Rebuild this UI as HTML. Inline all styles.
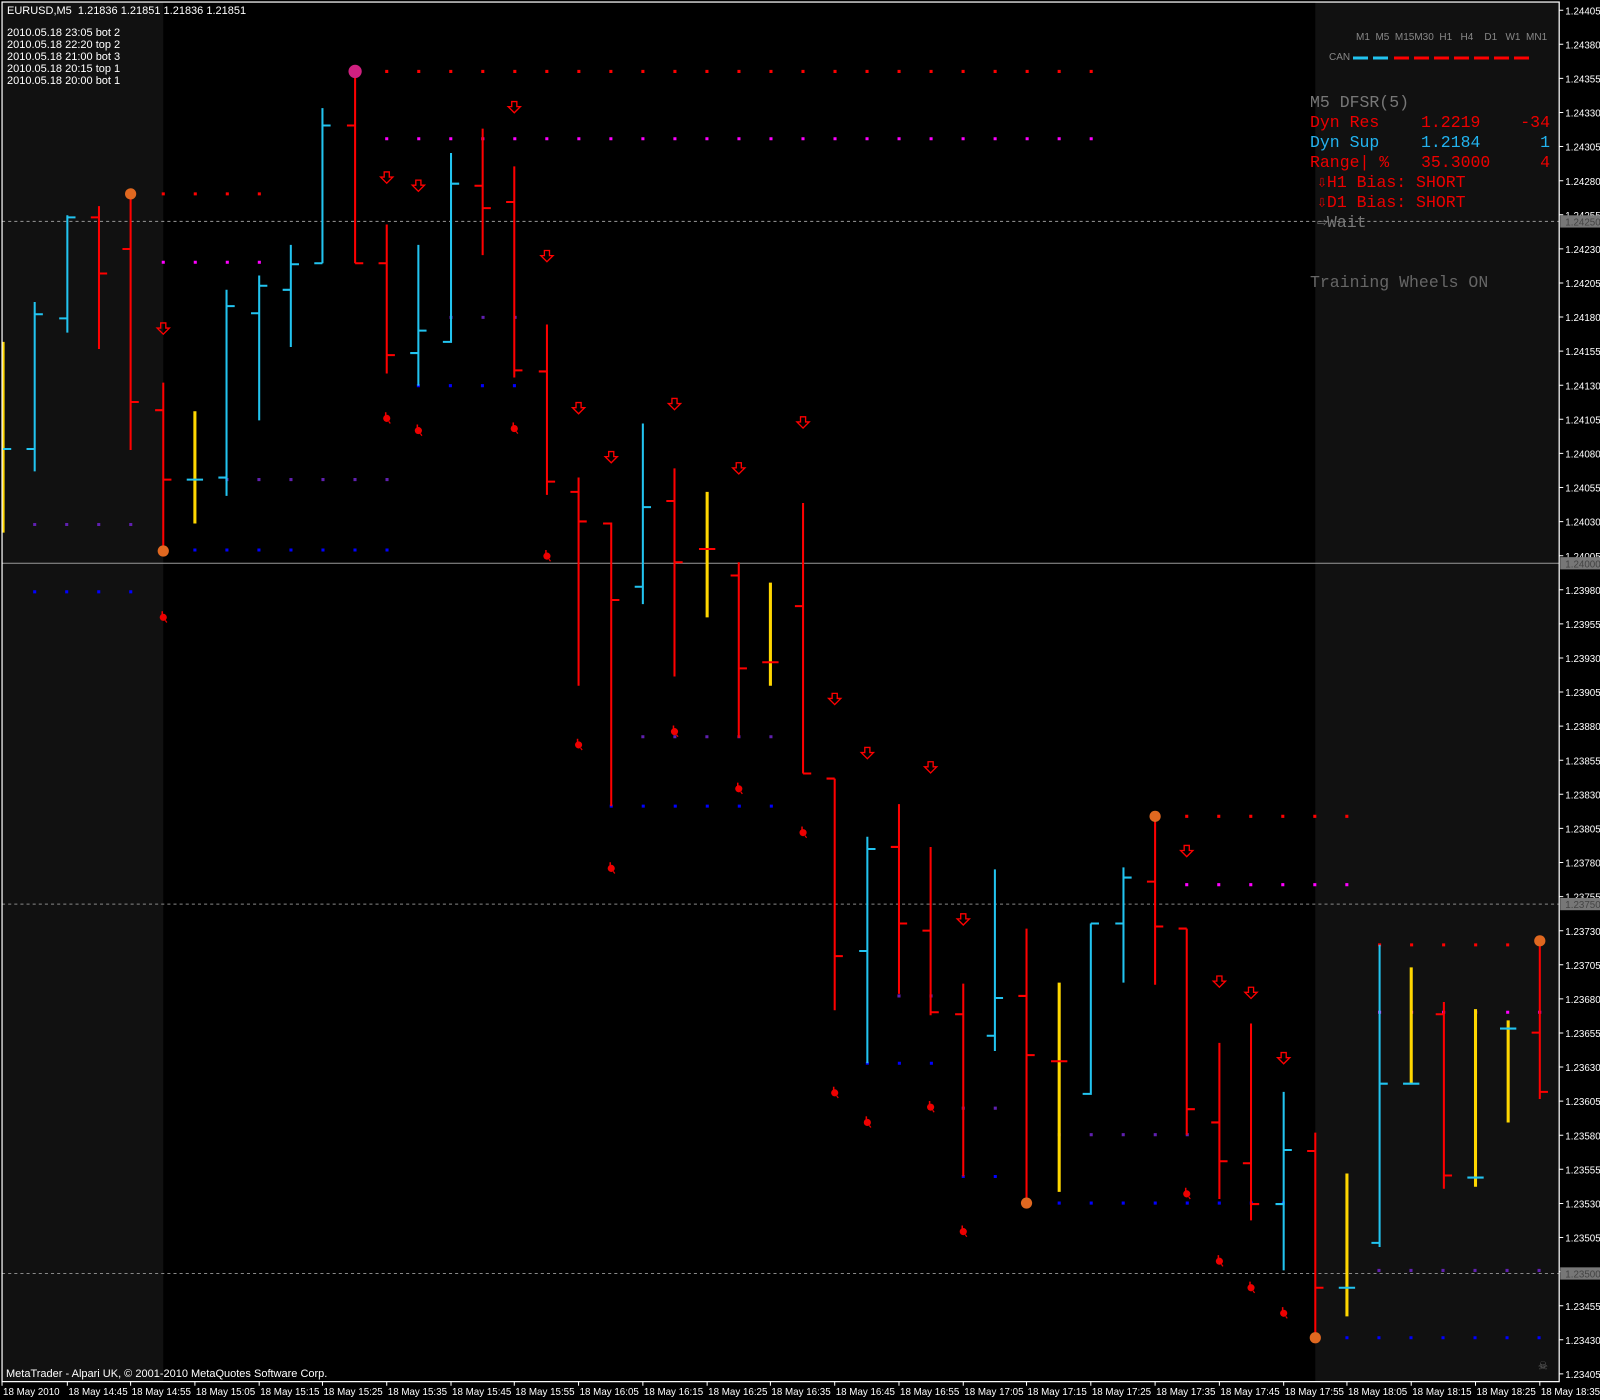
<!DOCTYPE html>
<html><head><meta charset="utf-8"><style>
html,body{margin:0;padding:0;background:#000;}
body{width:1600px;height:1400px;position:relative;overflow:hidden;font-family:"Liberation Sans",sans-serif;}
svg{position:absolute;left:0;top:0;}
.t{position:absolute;color:#fff;font-size:11px;white-space:pre;line-height:12px;}
.p{position:absolute;font-family:"Liberation Mono",monospace;font-size:16.5px;white-space:pre;line-height:18px;}
</style></head><body>
<svg width="1600" height="1400" viewBox="0 0 1568 1372">
<defs>
<path id="ar" d="M-2.5 -5.5h5v5h3.5l-6 6l-6 -6h3.5z" fill="none" stroke="#f00" stroke-width="1.3"/>
<g id="hd"><path d="M-3.5 0a3.5 3.5 0 1 0 7 0a3.5 3.5 0 1 0 -7 0z" fill="#e00"/><path d="M-1 -1v-5" stroke="#e00" stroke-width="1.5"/><path d="M2 3l1.5 2" stroke="#e00" stroke-width="1.2"/></g>
</defs>
<rect x="2" y="2" width="158" height="1352" fill="#111"/>
<rect x="1289" y="2" width="239" height="1352" fill="#111"/>
<line x1="2" y1="217" x2="1528" y2="217" stroke="#888" stroke-dasharray="3 3"/>
<line x1="2" y1="552" x2="1528" y2="552" stroke="#999"/>
<line x1="2" y1="886" x2="1528" y2="886" stroke="#888" stroke-dasharray="3 3"/>
<line x1="2" y1="1248" x2="1528" y2="1248" stroke="#888" stroke-dasharray="3 3"/>
<g stroke-width="3" stroke-dasharray="3 28.38" fill="none">
<line x1="377.5" y1="70" x2="1072" y2="70" stroke="#f00"/>
<line x1="377.5" y1="136" x2="1072" y2="136" stroke="#f0f"/>
<line x1="158.5" y1="190" x2="257" y2="190" stroke="#f00"/>
<line x1="158.5" y1="257" x2="257" y2="257" stroke="#f0f"/>
<line x1="189.5" y1="470" x2="382" y2="470" stroke="#6020b0"/>
<line x1="189.5" y1="539" x2="382" y2="539" stroke="#00f"/>
<line x1="32.5" y1="514" x2="131" y2="514" stroke="#6020b0"/>
<line x1="32.5" y1="580" x2="131" y2="580" stroke="#00f"/>
<line x1="408.5" y1="378" x2="507" y2="378" stroke="#00f"/>
<line x1="440.5" y1="311" x2="507" y2="311" stroke="#6020b0"/>
<line x1="628.5" y1="722" x2="758" y2="722" stroke="#6020b0"/>
<line x1="597.5" y1="790" x2="758" y2="790" stroke="#00f"/>
<line x1="1161.5" y1="800" x2="1323" y2="800" stroke="#f00"/>
<line x1="1161.5" y1="867" x2="1323" y2="867" stroke="#f0f"/>
<line x1="1350.5" y1="926" x2="1481" y2="926" stroke="#f00"/>
<line x1="1350.5" y1="992" x2="1512" y2="992" stroke="#f0f"/>
<line x1="848.5" y1="1042" x2="915" y2="1042" stroke="#00f"/>
<line x1="879.5" y1="976" x2="915" y2="976" stroke="#6020b0"/>
<line x1="942.5" y1="1153" x2="978" y2="1153" stroke="#00f"/>
<line x1="942.5" y1="1086" x2="978" y2="1086" stroke="#6020b0"/>
<line x1="1036.5" y1="1179" x2="1261" y2="1179" stroke="#00f"/>
<line x1="1036.5" y1="1112" x2="1166" y2="1112" stroke="#6020b0"/>
<line x1="1318.5" y1="1311" x2="1512" y2="1311" stroke="#00f"/>
<line x1="1318.5" y1="1245" x2="1512" y2="1245" stroke="#6020b0"/>
</g>
<g fill="none" stroke-width="2">
<path stroke="#f00" d="M97 202V342M89 213H97M97 268H105M128 190V441M120 244H128M128 394H136M160 375V540M152 402H160M160 470H168M348 70V258M340 123H348M348 258H356M379 220V366M371 258H379M379 348H387M473 126V250M465 182H473M473 204H481M504 163V370M496 198H504M504 363H512M536 318V485M528 364H536M536 472H544M567 468V672M559 482H567M567 511H575M599 512V790M591 513H599M599 588H607M661 459V663M653 491H661M661 551H669M724 551V723M716 564H724M724 655H732M787 493V758M779 594H787M787 758H795M818 763V990M810 763H818M818 937H826M881 788V974M873 830H881M881 905H889M912 830V995M904 912H912M912 992H920M944 964V1153M936 994H944M1006 910V1178M998 976H1006M1006 1034H1014M1132 800V965M1124 864H1132M1132 908H1140M1163 910V1112M1155 910H1163M1163 1087H1171M1195 1022V1175M1187 1100H1195M1195 1138H1203M1226 1003V1196M1218 1140H1226M1226 1180H1234M1289 1110V1312M1281 1128H1289M1289 1262H1297M1415 982V1165M1407 994H1415M1415 1152H1423M1509 923V1077M1501 1012H1509M1509 1070H1517"/>
<path stroke="#22c4f0" d="M34 296V462M26 440H34M34 308H42M66 211V326M58 312H66M66 213H74M222 284V486M214 468H222M222 300H230M254 270V412M246 307H254M254 280H262M285 240V340M277 284H285M285 259H293M316 106V258M308 258H316M316 123H324M410 240V378M402 346H410M410 324H418M442 150V336M434 335H442M442 180H450M630 415V592M622 575H630M630 497H638M850 820V1042M842 932H850M850 832H858M975 852V1030M967 1015H975M975 978H983M1069 905V1073M1061 1072H1069M1069 905H1077M1101 850V963M1093 905H1101M1101 860H1109M1258 1070V1245M1250 1180H1258M1258 1127H1266M1352 926V1222M1344 1218H1352M1352 1062H1360"/>
<path stroke="#ffd700" stroke-width="3" d="M3 335V522M191 403V513M693 482V605M755 571V672M1038 963V1168M1320 1150V1290M1383 948V1062M1446 989V1163M1478 1000V1100"/>
<path stroke="#22c4f0" d="M183 470H199M1312 1262H1328M1375 1062H1391M1438 1154H1454M1470 1008H1486M3 440H11"/>
<path stroke="#f00" d="M685 538H701M747 649H763M1030 1040H1046"/>
</g>
<g fill="#e06820">
<circle cx="128" cy="190" r="5.5"/><circle cx="160" cy="540" r="5.5"/><circle cx="1132" cy="800" r="5.5"/><circle cx="1006" cy="1179" r="5.5"/><circle cx="1509" cy="922" r="5.5"/><circle cx="1289" cy="1311" r="5.5"/>
<circle cx="348" cy="70" r="6.5" fill="#d02080"/>
</g>
<g>
<use href="#ar" x="160" y="322"/><use href="#ar" x="379" y="174"/><use href="#ar" x="410" y="182"/><use href="#ar" x="504" y="105"/><use href="#ar" x="536" y="251"/><use href="#ar" x="567" y="400"/><use href="#ar" x="599" y="448"/><use href="#ar" x="661" y="396"/><use href="#ar" x="724" y="459"/><use href="#ar" x="787" y="414"/><use href="#ar" x="818" y="685"/><use href="#ar" x="850" y="738"/><use href="#ar" x="912" y="752"/><use href="#ar" x="944" y="901"/><use href="#ar" x="1163" y="834"/><use href="#ar" x="1195" y="962"/><use href="#ar" x="1226" y="973"/><use href="#ar" x="1258" y="1037"/>
<use href="#hd" x="160" y="605"/><use href="#hd" x="379" y="410"/><use href="#hd" x="410" y="422"/><use href="#hd" x="504" y="420"/><use href="#hd" x="536" y="545"/><use href="#hd" x="567" y="730"/><use href="#hd" x="599" y="851"/><use href="#hd" x="661" y="717"/><use href="#hd" x="724" y="773"/><use href="#hd" x="787" y="816"/><use href="#hd" x="818" y="1071"/><use href="#hd" x="850" y="1100"/><use href="#hd" x="912" y="1085"/><use href="#hd" x="944" y="1207"/><use href="#hd" x="1163" y="1170"/><use href="#hd" x="1195" y="1236"/><use href="#hd" x="1226" y="1262"/><use href="#hd" x="1258" y="1287"/>
</g>
<text x="1512" y="1342" fill="#666" font-family="DejaVu Sans,sans-serif" font-size="11" text-anchor="middle">☠</text>
<rect x="2" y="2" width="1526" height="1352" fill="none" stroke="#fff" stroke-width="1.2"/>
<g stroke="#fff"><path d="M1528 10h4M1528 43.4h4M1528 76.8h4M1528 110.2h4M1528 143.6h4M1528 177.1h4M1528 210.5h4M1528 243.9h4M1528 277.3h4M1528 310.7h4M1528 344.1h4M1528 377.5h4M1528 410.9h4M1528 444.3h4M1528 477.7h4M1528 511.2h4M1528 544.6h4M1528 578h4M1528 611.4h4M1528 644.8h4M1528 678.2h4M1528 711.6h4M1528 745h4M1528 778.4h4M1528 811.8h4M1528 845.3h4M1528 878.7h4M1528 912.1h4M1528 945.5h4M1528 978.9h4M1528 1012.3h4M1528 1045.7h4M1528 1079.1h4M1528 1112.5h4M1528 1145.9h4M1528 1179.4h4M1528 1212.8h4M1528 1246.2h4M1528 1279.6h4M1528 1313h4M1528 1346.4h4"/>
<path d="M2 1354v4M66 1354v4M128 1354v4M191 1354v4M254 1354v4M316 1354v4M379 1354v4M442 1354v4M504 1354v4M567 1354v4M630 1354v4M693 1354v4M755 1354v4M818 1354v4M881 1354v4M944 1354v4M1006 1354v4M1069 1354v4M1132 1354v4M1195 1354v4M1258 1354v4M1320 1354v4M1383 1354v4M1446 1354v4M1509 1354v4"/></g>
<g fill="#fff" font-size="9.6" font-family="Liberation Sans,sans-serif">
<text x="1534" y="14">1.24405</text><text x="1534" y="47.4">1.24380</text><text x="1534" y="80.8">1.24355</text><text x="1534" y="114.2">1.24330</text><text x="1534" y="147.6">1.24305</text><text x="1534" y="181.1">1.24280</text><text x="1534" y="214.5">1.24255</text><text x="1534" y="247.9">1.24230</text><text x="1534" y="281.3">1.24205</text><text x="1534" y="314.7">1.24180</text><text x="1534" y="348.1">1.24155</text><text x="1534" y="381.5">1.24130</text><text x="1534" y="414.9">1.24105</text><text x="1534" y="448.3">1.24080</text><text x="1534" y="481.7">1.24055</text><text x="1534" y="515.2">1.24030</text><text x="1534" y="548.6">1.24005</text><text x="1534" y="582">1.23980</text><text x="1534" y="615.4">1.23955</text><text x="1534" y="648.8">1.23930</text><text x="1534" y="682.2">1.23905</text><text x="1534" y="715.6">1.23880</text><text x="1534" y="749">1.23855</text><text x="1534" y="782.4">1.23830</text><text x="1534" y="815.8">1.23805</text><text x="1534" y="849.3">1.23780</text><text x="1534" y="882.7">1.23755</text><text x="1534" y="916.1">1.23730</text><text x="1534" y="949.5">1.23705</text><text x="1534" y="982.9">1.23680</text><text x="1534" y="1016.3">1.23655</text><text x="1534" y="1049.7">1.23630</text><text x="1534" y="1083.1">1.23605</text><text x="1534" y="1116.5">1.23580</text><text x="1534" y="1149.9">1.23555</text><text x="1534" y="1183.4">1.23530</text><text x="1534" y="1216.8">1.23505</text><text x="1534" y="1250.2">1.23480</text><text x="1534" y="1283.6">1.23455</text><text x="1534" y="1317">1.23430</text><text x="1534" y="1350.4">1.23405</text>
</g>
<g font-size="9.6" font-family="Liberation Sans,sans-serif">
<rect x="1529" y="211" width="39" height="12" fill="#777"/><text x="1534" y="221" fill="#444">1.24250</text>
<rect x="1529" y="546" width="39" height="12" fill="#777"/><text x="1534" y="556" fill="#444">1.24000</text>
<rect x="1529" y="880" width="39" height="12" fill="#777"/><text x="1534" y="890" fill="#444">1.23750</text>
<rect x="1529" y="1242" width="39" height="12" fill="#777"/><text x="1534" y="1252" fill="#444">1.23500</text>
</g>
<g fill="#fff" font-size="9.6" font-family="Liberation Sans,sans-serif">
<text x="3" y="1367">18 May 2010</text><text x="67" y="1367">18 May 14:45</text><text x="129" y="1367">18 May 14:55</text><text x="192" y="1367">18 May 15:05</text><text x="255" y="1367">18 May 15:15</text><text x="317" y="1367">18 May 15:25</text><text x="380" y="1367">18 May 15:35</text><text x="443" y="1367">18 May 15:45</text><text x="505" y="1367">18 May 15:55</text><text x="568" y="1367">18 May 16:05</text><text x="631" y="1367">18 May 16:15</text><text x="694" y="1367">18 May 16:25</text><text x="756" y="1367">18 May 16:35</text><text x="819" y="1367">18 May 16:45</text><text x="882" y="1367">18 May 16:55</text><text x="945" y="1367">18 May 17:05</text><text x="1007" y="1367">18 May 17:15</text><text x="1070" y="1367">18 May 17:25</text><text x="1133" y="1367">18 May 17:35</text><text x="1196" y="1367">18 May 17:45</text><text x="1259" y="1367">18 May 17:55</text><text x="1321" y="1367">18 May 18:05</text><text x="1384" y="1367">18 May 18:15</text><text x="1447" y="1367">18 May 18:25</text><text x="1510" y="1367">18 May 18:35</text>
</g>
</svg>
<div class="t" style="left:7px;top:5px;">EURUSD,M5  1.21836 1.21851 1.21836 1.21851</div>
<div class="t" style="left:7px;top:27px;">2010.05.18 23:05 bot 2<br>2010.05.18 22:20 top 2<br>2010.05.18 21:00 bot 3<br>2010.05.18 20:15 top 1<br>2010.05.18 20:00 bot 1</div>
<div class="t" style="left:6px;top:1368px;">MetaTrader - Alpari UK, © 2001-2010 MetaQuotes Software Corp.</div>
<div class="t" style="left:1356px;top:32px;color:#888;font-size:10px;">M1  M5  M15M30  H1   H4    D1   W1  MN1</div>
<div class="t" style="left:1329px;top:52px;color:#888;font-size:10px;">CAN</div>
<svg width="1600" height="1400" style="pointer-events:none"><g stroke-width="3"><path stroke="#22c4f0" d="M1353 58h15M1373 58h15"/><path stroke="#f00" d="M1394 58h15M1414 58h15M1434 58h15M1454 58h15M1474 58h15M1494 58h15M1514 58h15"/></g></svg>
<div class="p" style="left:1310px;top:94px;color:#777;">M5 DFSR(5)</div>
<div class="p" style="left:1310px;top:114px;color:#e00;">Dyn Res</div><div class="p" style="left:1421px;top:114px;color:#e00;">1.2219</div><div class="p" style="left:1500px;top:114px;width:50px;text-align:right;color:#e00;">-34</div>
<div class="p" style="left:1310px;top:134px;color:#22b4f0;">Dyn Sup</div><div class="p" style="left:1421px;top:134px;color:#22b4f0;">1.2184</div><div class="p" style="left:1500px;top:134px;width:50px;text-align:right;color:#22b4f0;">1</div>
<div class="p" style="left:1310px;top:154px;color:#e00;">Range| %</div><div class="p" style="left:1421px;top:154px;color:#e00;">35.3000</div><div class="p" style="left:1500px;top:154px;width:50px;text-align:right;color:#e00;">4</div>
<div class="p" style="left:1317px;top:174px;color:#e00;">⇩H1 Bias: SHORT</div>
<div class="p" style="left:1317px;top:194px;color:#e00;">⇩D1 Bias: SHORT</div>
<div class="p" style="left:1317px;top:214px;color:#777;">⇨Wait</div>
<div class="p" style="left:1310px;top:274px;color:#666;">Training Wheels ON</div>
</body></html>
